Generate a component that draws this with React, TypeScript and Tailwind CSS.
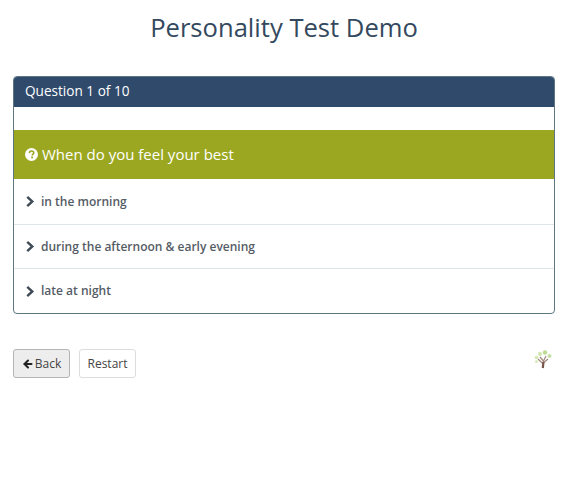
import { ArrowLeft } from "lucide-react";

const answers = [
  { text: "in the morning", height: "h-[45px]" },
  { text: "during the afternoon & early evening", height: "h-[44px]" },
  { text: "late at night", height: "h-[45px]" },
];

function HelpIcon() {
  return (
    <svg viewBox="0 0 14 14" className="mr-[4px] h-[13px] w-[13px] shrink-0">
      <circle cx="7" cy="7" r="7" fill="#ffffff" />
      <path
        d="M4.7 5.5C4.8 4 5.8 3.2 7.1 3.2c1.3 0 2.3.8 2.3 2 0 1.7-1.7 1.6-1.7 2.9"
        fill="none"
        stroke="#9ba720"
        strokeWidth="1.7"
      />
      <rect x="6.7" y="9.2" width="1.9" height="1.9" fill="#9ba720" />
    </svg>
  );
}

function ChevronIcon() {
  return (
    <svg viewBox="0 0 10 12" className="mr-[6px] h-[11px] w-[10px] shrink-0">
      <path d="M2 1 L7.5 6 L2 11" fill="none" stroke="#3f4a55" strokeWidth="2.6" />
    </svg>
  );
}

function Tree() {
  return (
    <svg viewBox="0 0 20 20" className="h-[20px] w-[20px]">
      <path d="M10 19 L10.5 12 L7 8 M10.5 12 L13 7 M10.3 14 L15 10 M10.3 15 L5 10" fill="none" stroke="#a1887f" strokeWidth="1.2" />
      <path d="M9.8 19 L10.5 13" stroke="#795548" strokeWidth="2.2" />
      <circle cx="7" cy="5" r="2" fill="#cfe5a8" />
      <circle cx="12" cy="3.5" r="2.2" fill="#bcdc94" />
      <circle cx="16.5" cy="7" r="2" fill="#c5e0a0" />
      <circle cx="3.5" cy="8.5" r="1.8" fill="#d3e8b2" />
      <circle cx="3.5" cy="12.5" r="1.6" fill="#d9ebbd" />
    </svg>
  );
}

export default function App() {
  return (
    <div className="h-[480px] w-[567px] overflow-hidden bg-white pl-[13px] font-['Open_Sans','Noto_Sans',sans-serif] text-[#3a4a5c]">
      <div className="w-[542px]">
        <h1 className="pt-[10px] text-center text-[25.6px] leading-[36px] text-[#34495e]">
          Personality Test Demo
        </h1>

        <div className="mt-[30px] overflow-hidden rounded-[4px] border border-[#5d7681]">
          <div className="h-[30px] bg-[#304a6c] px-[11px] text-[13.6px] leading-[28px] text-white">
            Question 1 of 10
          </div>
          <div className="h-[23px]" />
          <div className="flex h-[49px] items-center bg-[#9ba720] px-[11px] text-[15px] text-white">
            <HelpIcon />
            When do you feel your best
          </div>
          {answers.map((answer, i) => (
            <div
              key={answer.text}
              className={`flex ${answer.height} items-center px-[11px] text-[12px] font-semibold text-[#555c66] ${
                i > 0 ? "border-t border-[#dde6e8]" : ""
              }`}
            >
              <ChevronIcon />
              {answer.text}
            </div>
          ))}
        </div>

        <div className="mt-[35px] flex items-start justify-between">
          <div className="flex gap-[9px]">
            <button className="flex h-[29px] w-[57px] items-center justify-center rounded-[3px] border border-[#b4b4b4] bg-[#ededed] text-[12px] text-[#444]">
              <ArrowLeft className="mr-[1px] h-[12px] w-[12px] text-[#222]" strokeWidth={4} />
              Back
            </button>
            <button className="h-[29px] w-[57px] rounded-[3px] border border-[#dddddd] bg-white text-[12px] text-[#444]">
              Restart
            </button>
          </div>
          <div className="mr-[2px]">
            <Tree />
          </div>
        </div>
      </div>
    </div>
  );
}
